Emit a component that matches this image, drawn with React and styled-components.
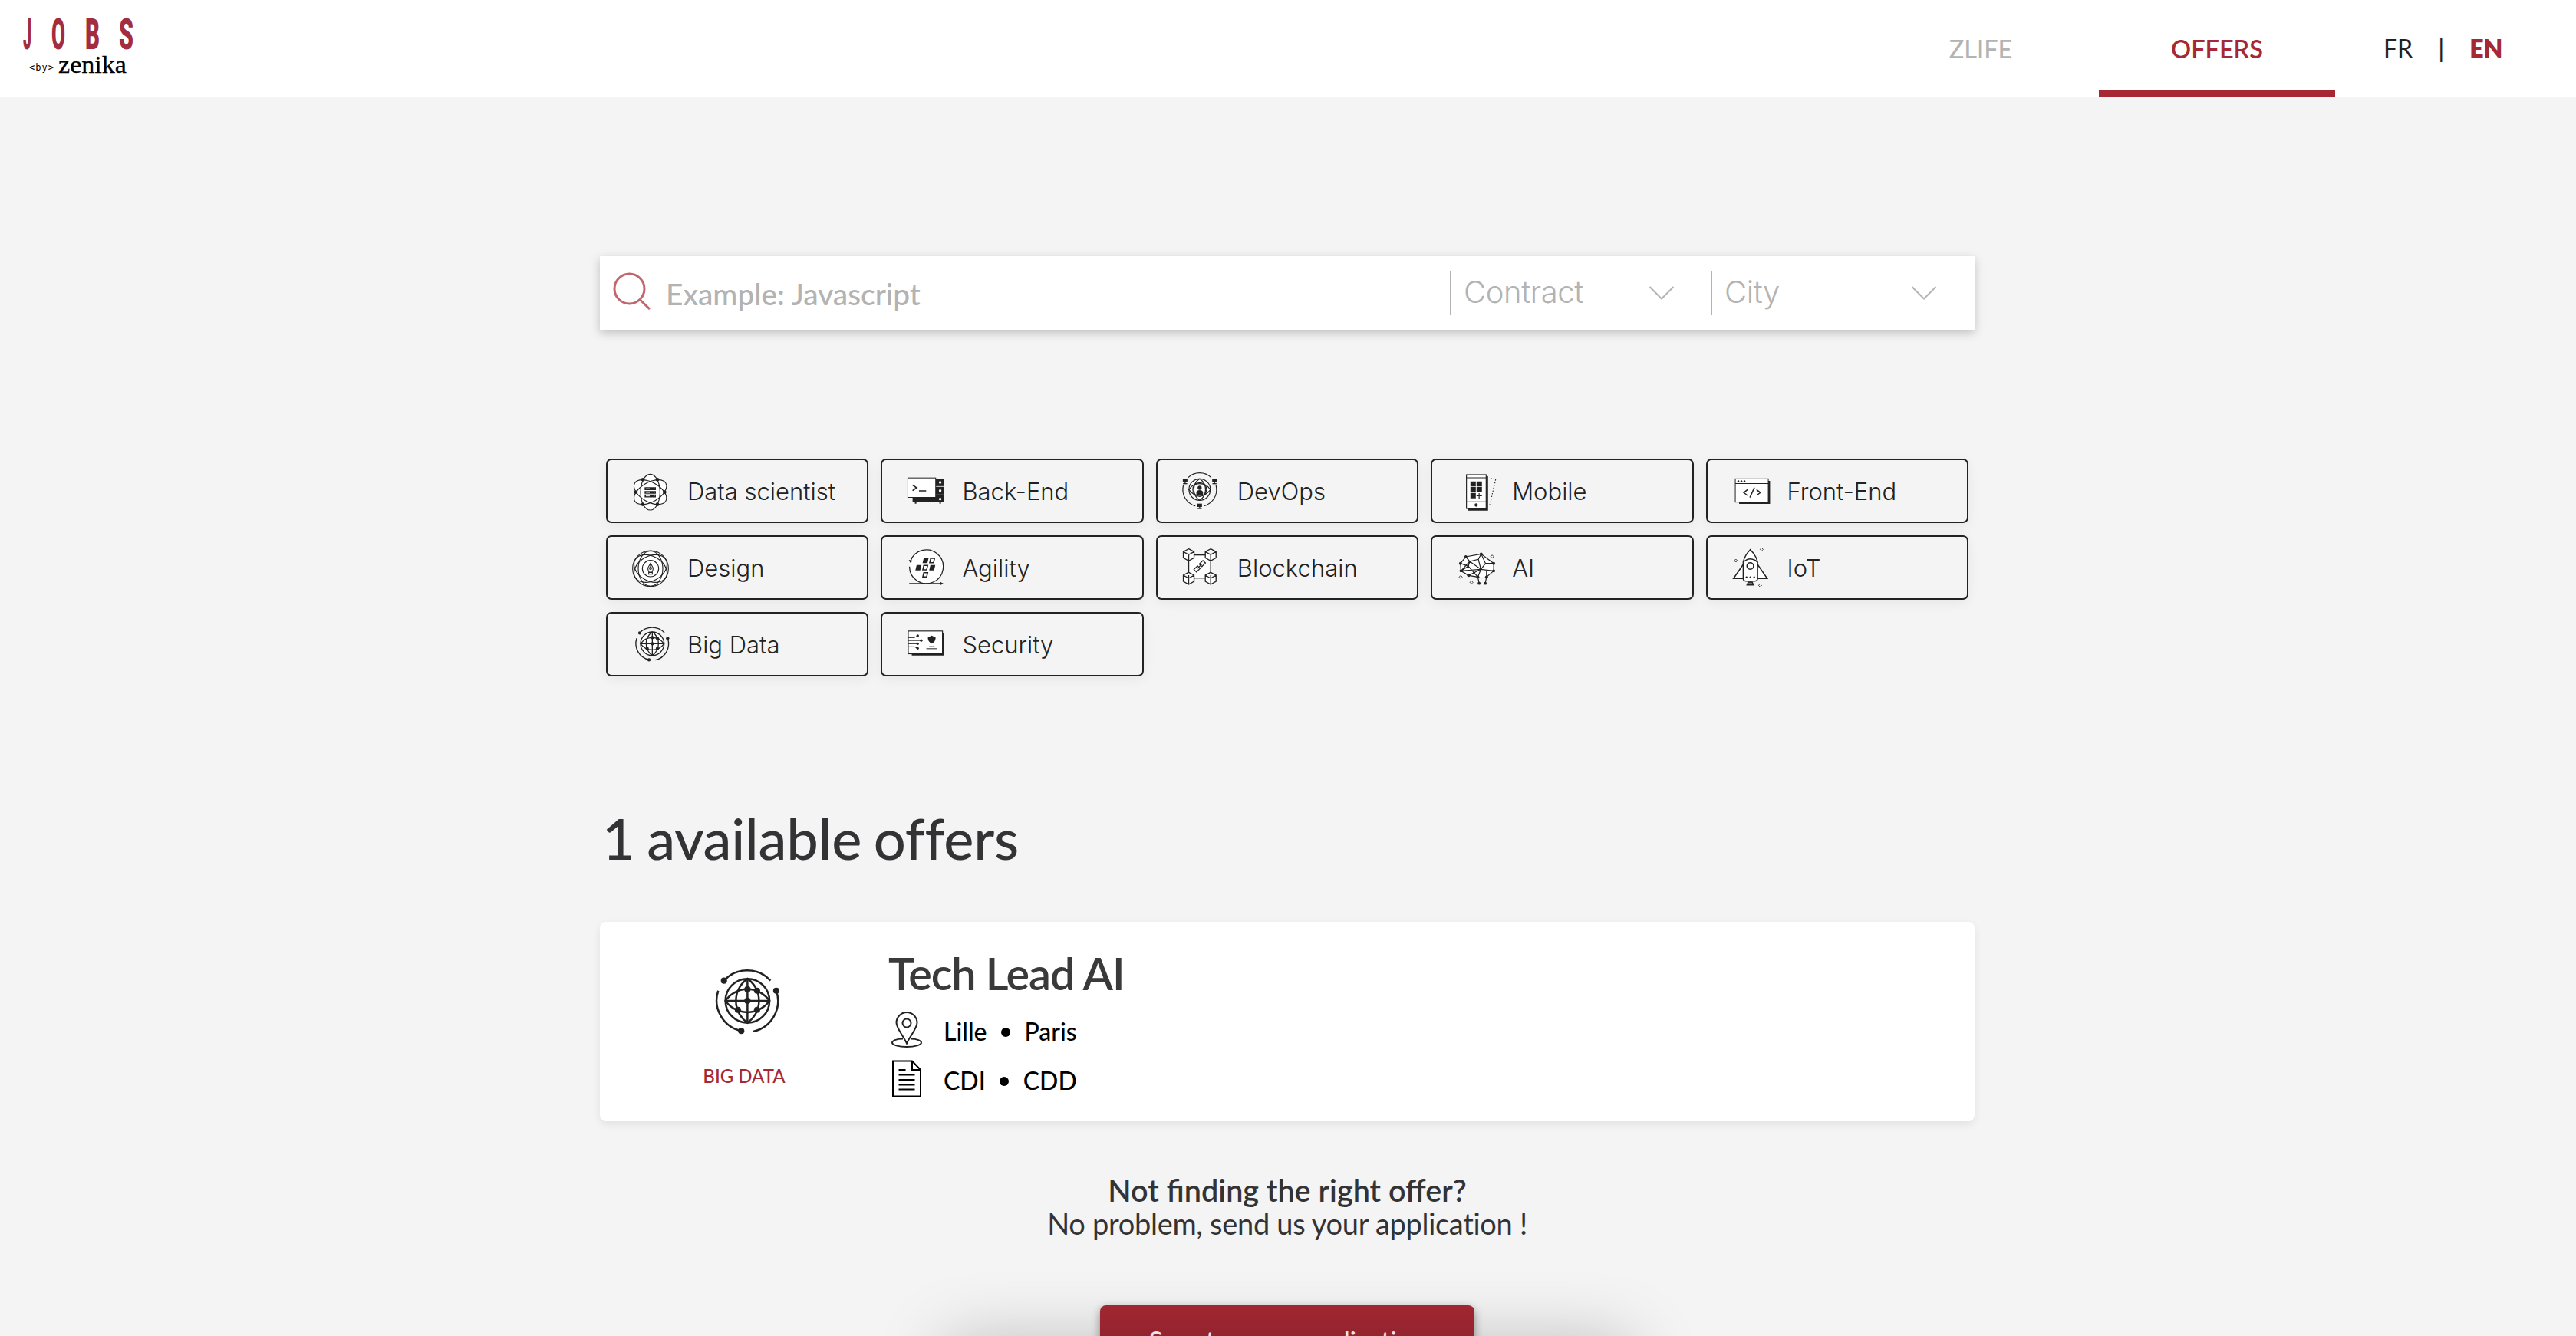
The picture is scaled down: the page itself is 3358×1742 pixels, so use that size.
import React from "react";
import styled, { createGlobalStyle } from "styled-components";

const INK = "#222222";
const RED = "#a52834";
const GREY = "#b3b3b3";

const GlobalStyle = createGlobalStyle`
  html, body { margin: 0; padding: 0; background: #f4f4f4; }
  body { height: 1742px; overflow: hidden; font-family: Lato, "Open Sans", sans-serif; color: #333335; }
  *, *::before, *::after { box-sizing: border-box; }
  h1, h2, p { margin: 0; font-weight: 400; }
`;

const Page = styled.div`
  height: 1742px;
  overflow: hidden;
  background: #f4f4f4;
`;

const Header = styled.header`
  display: flex;
  justify-content: space-between;
  height: 126px;
  background: #ffffff;
`;

const Logo = styled.svg`
  display: block;
  width: 200px;
  height: 126px;
`;

const Nav = styled.nav`
  display: flex;
`;

const NavItem = styled.a`
  width: 308px;
  height: 126px;
  text-align: center;
  font-size: 32.5px;
  line-height: 128px;
  font-weight: ${(p) => (p.$active ? 600 : 500)};
  color: ${(p) => (p.$active ? RED : GREY)};
  box-shadow: ${(p) => (p.$active ? `inset 0 -8px 0 ${RED}` : "none")};
`;

const Languages = styled.div`
  display: flex;
  gap: 33px;
  width: 314px;
  padding-left: 63px;
  font-size: 32px;
  line-height: 125px;
`;

const Language = styled.span`
  font-weight: ${(p) => (p.$active ? 800 : 400)};
  color: ${(p) => (p.$active ? RED : INK)};
`;

const Main = styled.main`
  padding: 208px 2px 0 0;
`;

const Column = styled.div`
  width: 1792px;
  margin: 0 auto;
`;

const SearchBar = styled.div`
  display: flex;
  align-items: center;
  height: 96px;
  background: #ffffff;
  box-shadow: 0 4px 12px rgba(0, 0, 0, 0.22);
`;

const SearchField = styled.div`
  display: flex;
  align-items: center;
  flex: 1;
  gap: 20px;
  padding-left: 16px;
  font-size: 38.8px;
  line-height: 98px;
  font-weight: 500;
  color: ${GREY};
`;

const Placeholder = styled.span`
  padding-top: 2px;
`;

const SearchIcon = styled.svg`
  width: 50px;
  height: 50px;
  margin-bottom: 6px;
`;

const Select = styled.div`
  display: flex;
  align-items: center;
  justify-content: space-between;
  width: ${(p) => p.$width}px;
  height: 58px;
  padding: 0 ${(p) => p.$end}px 0 16px;
  border-left: 2px solid ${GREY};
  font-family: Inter, Roboto, sans-serif;
  font-weight: 300;
  font-size: 40px;
  line-height: 57px;
  letter-spacing: -0.4px;
  color: ${GREY};
`;

const SelectLabel = styled.span`
  padding-bottom: 3px;
`;

const Chevron = styled.svg`
  width: 34px;
  height: 20px;
`;

const ChipGrid = styled.div`
  display: grid;
  grid-template-columns: repeat(5, 1fr);
  gap: 16px;
  margin-top: 168px;
  padding: 0 8px;
`;

const Chip = styled.div`
  display: flex;
  align-items: center;
  height: 84px;
  padding-left: 32px;
  border: 2px solid ${INK};
  border-radius: 7px;
  box-shadow: 0 4px 16px rgba(0, 0, 0, 0.06);
  font-family: Inter, Roboto, sans-serif;
  font-weight: 300;
  font-size: 31px;
  line-height: 81px;
  color: ${INK};
`;

const ChipIcon = styled.svg`
  width: 48px;
  height: 48px;
  margin: 2px 24px 0 0;
  overflow: visible;
`;

const Heading = styled.h1`
  margin-top: 163px;
  padding-left: 3px;
  font-size: 74px;
  line-height: 96px;
  font-weight: 500;
  letter-spacing: -0.2px;
  word-spacing: -3px;
`;

const OfferCard = styled.article`
  display: flex;
  height: 260px;
  margin-top: 61px;
  background: #ffffff;
  border-radius: 8px;
  box-shadow: 0 4px 12px rgba(0, 0, 0, 0.08);
`;

const OfferCategory = styled.div`
  display: flex;
  flex-direction: column;
  align-items: center;
  width: 376px;
  padding-top: 61px;
  gap: 35px;
  font-size: 24px;
  line-height: 30px;
  font-weight: 500;
  color: ${RED};
`;

const CategoryIcon = styled.svg`
  width: 90px;
  height: 90px;
  overflow: visible;
`;

const OfferBody = styled.div`
  padding-top: 32px;
`;

const OfferTitle = styled.h2`
  margin-bottom: 7px;
  font-size: 57.6px;
  line-height: 70px;
  font-weight: 600;
  letter-spacing: -1.1px;
  color: #3a3a3a;
`;

const MetaRow = styled.div`
  display: flex;
  align-items: center;
  height: 64px;
  font-size: 32px;
  line-height: 40px;
  font-weight: 500;
  color: #000000;
`;

const MetaText = styled.span`
  padding-top: 3px;
`;

const MetaIcon = styled.svg`
  width: 48px;
  height: 50px;
  margin-right: 24px;
`;

const Bullet = styled.i`
  width: 12px;
  height: 12px;
  margin: 6px 19px 0 18px;
  border-radius: 50%;
  background: #000000;
`;

const Apply = styled.section`
  display: flex;
  flex-direction: column;
  align-items: center;
  margin-top: 67px;
`;

const ApplyTitle = styled.p`
  font-size: 39.6px;
  line-height: 45px;
  font-weight: 600;
`;

const ApplyText = styled.p`
  font-size: 38px;
  line-height: 43px;
  letter-spacing: -0.3px;
`;

const ApplyButton = styled.a`
  width: 488px;
  height: 90px;
  margin-top: 85px;
  border-radius: 8px;
  background: ${RED};
  box-shadow: 0 4px 12px rgba(0, 0, 0, 0.4);
  text-align: center;
  font-size: 33.4px;
  font-variant-ligatures: none;
  line-height: 90px;
  font-weight: 500;
  color: #ffffff;
`;

const DockShade = styled.div`
  position: fixed;
  left: 1234px;
  top: 1752px;
  width: 890px;
  height: 120px;
  box-shadow: 0 0 90px rgba(0, 0, 0, 0.25);
  pointer-events: none;
`;

const Sparkle = ({ x, y }) => (
  <path d={`M${x} ${y - 6}l6 6l-6 6l-6-6z`} strokeWidth="2.6" />
);

const Dots = ({ points, r }) =>
  points.map(([x, y]) => (
    <circle key={`${x}-${y}`} cx={x} cy={y} r={r} fill={INK} stroke="none" />
  ));

const Globe = () => (
  <g strokeWidth="4">
    <circle cx="151" cy="703" r="46" fill="#fff" />
    <path d="M151 657V749M105 703H197" />
    <path d="M151 657a56 56 0 0 1 0 92a56 56 0 0 1 0-92zM105 703a56 56 0 0 1 92 0a56 56 0 0 1-92 0z" />
    <path d="M102 661A65.500 65.500 0 0 1 199 661M211 682A65 65 0 0 1 163 767M90 682A65 65 0 0 0 138 766" />
    <Dots points={[[102, 661], [211, 682], [138, 766], [151, 679], [171, 682], [151, 703], [131, 722], [171, 722]]} r={6.500} />
  </g>
);

const Tilted = ({ x, y, filled }) => (
  <path
    d={filled ? `M${x + 6} ${y}h19l-5 21h-19z` : `M${x + 7} ${y + 2}h15l-4 17h-15z`}
    fill={filled ? INK : "#fff"}
    stroke={filled ? "none" : INK}
    strokeWidth="4.500"
  />
);

const Cube = ({ x, y }) => (
  <path
    d={`M${x} ${y - 23}l21 11v24l-21 12l-21-12v-24zM${x - 21} ${y - 12}l21 12l21-12M${x} ${y}v24`}
    fill="#fff"
    strokeWidth="4"
  />
);

const Monitor = ({ x, y }) => (
  <g fill={INK} stroke="none">
    <rect x={x - 9} y={y - 10} width="18" height="13" />
    <rect x={x - 2} y={y + 3} width="4" height="5" />
    <rect x={x - 8} y={y + 7} width="16" height="4" />
  </g>
);

const categories = [
  {
    name: "Data scientist",
    box: "72 36 144 144",
    art: (
      <g strokeWidth="3.400">
        {[0, 60, 120].map((a) => (
          <ellipse key={`f${a}`} cx="143" cy="110" rx="38" ry="70" fill="#fff" stroke="none" transform={`rotate(${a} 143 110)`} />
        ))}
        {[0, 60, 120].map((a) => (
          <ellipse key={a} cx="143" cy="110" rx="38" ry="70" transform={`rotate(${a} 143 110)`} />
        ))}
        <Dots points={[[114, 61], [171, 61], [87, 110], [199, 110], [114, 158], [171, 158]]} r={7} />
        <path d="M121 96.500h44M121 111h44M121 125h44" strokeWidth="11" />
        <path d="M126 96.500h15M126 111h15M126 125h15M157 96.500h3M157 111h3M157 125h3" stroke="#fff" strokeWidth="3" />
      </g>
    ),
  },
  {
    name: "Back-End",
    box: "67.2 36 144 144",
    art: (
      <g>
        <path d="M90 58H213V150H90z" fill={INK} stroke="none" />
        <path d="M181 88h32M181 121h32" stroke="#fff" strokeWidth="2.500" />
        <path d="M102 150v5M198 150v5" strokeWidth="6" />
        <circle cx="198" cy="72" r="5" fill="#fff" stroke="none" />
        <circle cx="198" cy="104" r="5" fill="#fff" stroke="none" />
        <circle cx="198" cy="137" r="5" fill="#fff" stroke="none" />
        <rect x="71.500" y="54.500" width="109" height="76" fill="#fff" strokeWidth="3" />
        <path d="M90 82l16 11l-16 11M115 105h28" strokeWidth="5" />
      </g>
    ),
  },
  {
    name: "DevOps",
    box: "62.4 51 144 144",
    art: (
      <g strokeWidth="3.600">
        <circle cx="131" cy="115" r="42" fill="#fff" />
        <circle cx="131" cy="115" r="27" />
        <path d="M131 73a50 50 0 0 1 0 84a50 50 0 0 1 0-84zM89 115a50 50 0 0 1 84 0a50 50 0 0 1-84 0z" />
        <circle cx="131" cy="108" r="8" fill={INK} stroke="none" />
        <path d="M118 137v-9q0-11 13-11t13 11v9z" fill={INK} stroke="none" />
        <path d="M86 68A65 65 0 0 1 176 68M67 99A66 66 0 0 0 114 179M195 99A66 66 0 0 1 148 179" />
        <Monitor x={74} y={83} />
        <Monitor x={189} y={83} />
        <Monitor x={131} y={180} />
      </g>
    ),
  },
  {
    name: "Mobile",
    box: "1137.6 51 144 144",
    art: (
      <g>
        <path d="M1182 63H1260V197H1182z" fill={INK} stroke="none" />
        <rect x="1175.500" y="57" width="77" height="132" fill="#fff" strokeWidth="3.500" />
        <path d="M1175 69h77M1175 163h77" strokeWidth="3.500" />
        <path d="M1191 83h21v20h-21zM1215 83h21v20h-21zM1191 105h21v21h-21zM1215 105h21v21h-21zM1191 128h21v21h-21z" fill={INK} stroke="none" />
        <path d="M1225 129v21M1215 139.500h21" strokeWidth="3.500" />
        <circle cx="1213.500" cy="175.500" r="6.500" fill={INK} stroke="none" />
        <path d="M1270 71l20 3l-24 104" strokeWidth="3.500" strokeDasharray="4 7" />
      </g>
    ),
  },
  {
    name: "Front-End",
    box: "172.8 111 144 144",
    art: (
      <g>
        <path d="M200 141H321V231H200z" fill={INK} stroke="none" />
        <rect x="185" y="133" width="129" height="91" fill="#fff" strokeWidth="3" />
        <path d="M185 151.500h129" strokeWidth="3" />
        <Dots points={[[197, 142], [209, 142], [221, 142]]} r={3.500} />
        <path d="M233 175l-15 12l15 11M260 167l-18 39M268 175l15 12l-15 11" strokeWidth="4.500" />
      </g>
    ),
  },
  {
    name: "Design",
    box: "72 336 144 144",
    art: (
      <g strokeWidth="3.400">
        <circle cx="144" cy="409" r="70" fill="#fff" />
        {[0, 60, 120].map((a) => (
          <ellipse key={a} cx="144" cy="409" rx="48" ry="69" transform={`rotate(${a} 144 409)`} />
        ))}
        <circle cx="144" cy="409" r="32" />
        <path d="M144 388l10 18q1 8-4 17h-12q-5-9-4-17zM137 424h14v7h-14zM144 388v16" />
        <circle cx="144" cy="408" r="4" />
      </g>
    ),
  },
  {
    name: "Agility",
    box: "67.2 336 144 144",
    art: (
      <g>
        <circle cx="144" cy="401" r="66" fill="#fff" stroke="none" />
        <path d="M81 382A66 66 0 1 1 78 401" strokeWidth="3.800" />
        <path d="M75 375l7 13l8-10z" fill={INK} stroke="none" />
        <path d="M77 468h129" strokeWidth="5" />
        <path d="M198 461l13 7l-13 6z" fill={INK} stroke="none" />
        <Tilted x={128} y={367} filled />
        <Tilted x={154} y={367} />
        <Tilted x={100} y={395} filled />
        <Tilted x={127} y={395} />
        <Tilted x={154} y={395} filled />
        <Tilted x={127} y={423} />
      </g>
    ),
  },
  {
    name: "Blockchain",
    box: "62.4 351 144 144",
    art: (
      <g>
        <rect x="88" y="371" width="86" height="90" fill="#fff" strokeWidth="4" />
        <Cube x={88} y={370} />
        <Cube x={174} y={370} />
        <Cube x={88} y={462} />
        <Cube x={174} y={462} />
        <g transform="rotate(-45 131 415)" strokeWidth="3.800">
          <path d="M126 408h-20v14h20zM136 408h20v14h-20zM119 415h24" />
        </g>
      </g>
    ),
  },
  {
    name: "AI",
    box: "1137.6 351 144 144",
    art: (
      <g strokeWidth="3.600">
        <path d="M1173 378L1233 367L1282 404V433L1254 457L1220 457L1184 451L1154 433L1152 404z" fill="#fff" stroke="none" />
        <path d="M1225 482L1220 457L1184 451L1154 433L1152 404L1173 378L1233 367L1282 404V433L1254 457L1249 482" />
        <path d="M1173 378L1188 396L1222 388L1233 367L1250 404L1282 404M1250 404L1232 427L1222 388M1188 396L1232 427L1154 433L1183 415L1152 404M1188 396L1183 415L1220 457L1232 427L1282 433M1232 427L1184 451M1188 396L1154 433M1254 457V433" />
        <Dots points={[[1173, 378], [1233, 367], [1282, 404], [1282, 433], [1254, 457], [1249, 482], [1225, 482], [1220, 457], [1184, 451], [1154, 433], [1152, 404]]} r={5.800} />
        <Sparkle x={1276} y={377} />
        <Sparkle x={1153} y={457} />
        <Sparkle x={1195} y={478} />
      </g>
    ),
  },
  {
    name: "IoT",
    box: "172.8 411 144 144",
    art: (
      <g strokeWidth="4.500">
        <path d="M216 468L178 523H216M272 468L310 523H272" fill="#fff" />
        <path d="M216 458Q222 432 243.500 410Q266 432 272 458V523Q272 533 262 533H226Q216 533 216 523z" fill="#fff" />
        <path d="M217 458Q243.500 434 271 458" />
        <circle cx="243.500" cy="474" r="13" />
        <Dots points={[[229, 518], [244, 518], [259, 518]]} r={3.600} />
        <path d="M236 537h15l5 11h-25z" fill="#777" />
        <Sparkle x={288} y={409} />
        <Sparkle x={187} y={453} />
        <Sparkle x={282} y={550} />
      </g>
    ),
  },
  { name: "Big Data", box: "72 636 144 144", art: <Globe /> },
  {
    name: "Security",
    box: "67.2 636 144 144",
    art: (
      <g>
        <path d="M87 662H214V749H87z" fill={INK} stroke="none" />
        <rect x="73" y="653.500" width="134" height="89" fill="#fff" strokeWidth="3.500" />
        <path d="M73 679h24l13-7M73 690.500h50M73 703h38M73 715h24l13 6" strokeWidth="3" />
        <Dots points={[[110, 672], [124, 690.500], [110, 703], [110, 721]]} r={5} />
        <path d="M165 671q7 5 15 5q2 18-15 27q-17-9-15-27q8 0 15-5z" fill={INK} stroke="none" />
        <path d="M155 714.500h21M144 722.500h43" strokeWidth="3" />
      </g>
    ),
  },
];

const logoLetters = [
  { char: "J", x: 30, scale: 0.36 },
  { char: "O", x: 67, scale: 0.474 },
  { char: "B", x: 111, scale: 0.535 },
  { char: "S", x: 155, scale: 0.552 },
];

const DownChevron = () => (
  <Chevron viewBox="0 0 34 20" fill="none" stroke={GREY} strokeWidth="2">
    <path d="M1.500 2L17 17.500L32.500 2" />
  </Chevron>
);

export default function App() {
  return (
    <Page>
      <GlobalStyle />
      <Header>
        <Logo viewBox="0 0 200 126">
          <g fill="#a32c40" fontFamily="Roboto, sans-serif" fontWeight="900" fontSize="55">
            {logoLetters.map((l) => (
              <text key={l.char} transform={`translate(${l.x} 63.500) scale(${l.scale} 1)`}>
                {l.char}
              </text>
            ))}
          </g>
          <text x="38" y="92" fontFamily="DejaVu Sans Mono, monospace" fontSize="12" letterSpacing="1">
            &lt;by&gt;
          </text>
          <text transform="translate(76 94.500) scale(1.066 1)" fontFamily="Liberation Serif, serif" fontSize="32" stroke="#000" strokeWidth="0.300">
            zenika
          </text>
        </Logo>
        <Nav>
          <NavItem>ZLIFE</NavItem>
          <NavItem $active>OFFERS</NavItem>
          <Languages>
            <Language>FR</Language>
            <Language>|</Language>
            <Language $active>EN</Language>
          </Languages>
        </Nav>
      </Header>
      <Main>
        <Column>
          <SearchBar>
            <SearchField>
              <SearchIcon viewBox="0 0 50 50" fill="none" stroke="#c2666e" strokeWidth="3">
                <circle cx="22.500" cy="22.500" r="19.500" />
                <path d="M36 36.500L49 49" />
              </SearchIcon>
              <Placeholder>Example: Javascript</Placeholder>
            </SearchField>
            <Select $width={340} $end={47}>
              <SelectLabel>Contract</SelectLabel>
              <DownChevron />
            </Select>
            <Select $width={344} $end={49}>
              <SelectLabel>City</SelectLabel>
              <DownChevron />
            </Select>
          </SearchBar>
          <ChipGrid>
            {categories.map((c) => (
              <Chip key={c.name}>
                <ChipIcon viewBox={c.box} fill="none" stroke={INK}>
                  {c.art}
                </ChipIcon>
                {c.name}
              </Chip>
            ))}
          </ChipGrid>
          <Heading>1 available offers</Heading>
          <OfferCard>
            <OfferCategory>
              <CategoryIcon viewBox="72 636 144 144" fill="none" stroke={INK}>
                <Globe />
              </CategoryIcon>
              BIG DATA
            </OfferCategory>
            <OfferBody>
              <OfferTitle>Tech Lead AI</OfferTitle>
              <MetaRow>
                <MetaIcon viewBox="0 0 48 50" fill="none" stroke={INK} strokeWidth="2">
                  <path d="M19 36.500C10 36.500 5 39 5 41.500C5 44.500 13 47 24 47S43 44.500 43 41.500C43 39 38 36.500 29 36.500" />
                  <path d="M24 42.500C20 33 10.500 23 10.500 15.500a13.500 13.500 0 0 1 27 0C37.500 23 28 33 24 42.500z" />
                  <circle cx="24" cy="16" r="5.500" />
                </MetaIcon>
                <MetaText>Lille</MetaText>
                <Bullet />
                <MetaText>Paris</MetaText>
              </MetaRow>
              <MetaRow>
                <MetaIcon viewBox="0 0 48 50" fill="none" stroke="#000" strokeWidth="2">
                  <path d="M6 1.500H31L42 13V47.500H6zM31 1.500V13H42" />
                  <path d="M13.500 13h9M13.500 19.500h21M13.500 26h21M13.500 32.500h21M13.500 38.500h21" />
                </MetaIcon>
                <MetaText>CDI</MetaText>
                <Bullet />
                <MetaText>CDD</MetaText>
              </MetaRow>
            </OfferBody>
          </OfferCard>
          <Apply>
            <ApplyTitle>Not finding the right offer?</ApplyTitle>
            <ApplyText>No problem, send us your application !</ApplyText>
            <ApplyButton>Spontaneous application</ApplyButton>
          </Apply>
        </Column>
      </Main>
      <DockShade />
    </Page>
  );
}
